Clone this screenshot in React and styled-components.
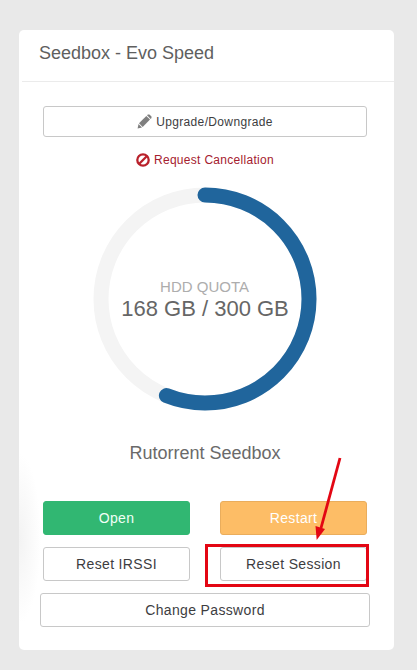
import React from "react";
import styled, { createGlobalStyle } from "styled-components";

const USED = 168;
const TOTAL = 300;
const RADIUS = 104;

const GlobalStyle = createGlobalStyle`
  html, body {
    margin: 0;
    background: #e9e9e9;
    font-family: "Liberation Sans", Arial, sans-serif;
  }
`;

const Page = styled.div`
  position: relative;
  width: 417px;
  height: 670px;
  padding: 30px 23px 20px 19px;
  box-sizing: border-box;
  overflow: hidden;
`;

const Card = styled.section`
  height: 620px;
  background: radial-gradient(ellipse 22px 85px at 0 82%, #f3f3f3, #fff);
  border-radius: 5px;
  box-sizing: border-box;
`;

const Header = styled.header`
  height: 52px;
  margin-left: 3px;
  padding-left: 18px;
  box-sizing: border-box;
  border-bottom: 1px solid #ebebeb;
  display: flex;
  align-items: center;
  padding-bottom: 5px;
`;

const Title = styled.h2`
  margin: 0 0 0 -1px;
  font-size: 18px;
  font-weight: 400;
  color: #5f5f5f;
`;

const Body = styled.div`
  padding: 24px 27px 0 24px;
  display: flex;
  flex-direction: column;
  align-items: stretch;
`;

const Button = styled.button`
  height: ${(p) => p.$height || 34}px;
  margin: 0;
  padding: 0;
  border: 1px solid ${(p) => p.$border || "#c8c8c8"};
  border-radius: 3px;
  background: ${(p) => p.$bg || "#fff"};
  color: ${(p) => p.$color || "#3d3d3f"};
  font-family: inherit;
  font-size: ${(p) => p.$size || 14}px;
  letter-spacing: 0.35px;
  display: flex;
  align-items: center;
  justify-content: center;
  gap: 4px;
  box-sizing: border-box;
`;

const CancelLink = styled.a`
  margin-top: 15px;
  height: 16px;
  display: flex;
  align-items: center;
  justify-content: center;
  gap: 4px;
  font-size: 12px;
  letter-spacing: 0.3px;
  color: #a5202e;
`;

const Quota = styled.div`
  position: relative;
  align-self: center;
  width: 224px;
  height: 224px;
  margin-top: 19px;
`;

const Ring = styled.svg`
  display: block;
`;

const QuotaText = styled.div`
  position: absolute;
  inset: 0;
  display: flex;
  flex-direction: column;
  align-items: center;
  justify-content: center;
`;

const QuotaLabel = styled.div`
  font-size: 15px;
  line-height: 17px;
  margin-top: 1px;
  margin-right: 1px;
  color: #adadad;
`;

const QuotaValue = styled.div`
  font-size: 22px;
  line-height: 27px;
  color: #666;
`;

const ServiceName = styled.h3`
  margin: 30px 0 0;
  font-size: 18px;
  line-height: 24px;
  font-weight: 400;
  text-align: center;
  color: #6a6a6a;
`;

const ButtonGrid = styled.div`
  margin-top: 36px;
  display: grid;
  grid-template-columns: 147px 147px;
  justify-content: space-between;
  row-gap: 12px;
`;

const WideButton = styled(Button)`
  margin: 12px -3px 0;
`;

const Highlight = styled.div`
  position: absolute;
  left: 205px;
  top: 544px;
  width: 164px;
  height: 43px;
  box-sizing: border-box;
  border: 3px solid #e30613;
`;

const Arrow = styled.svg`
  position: absolute;
  left: 310px;
  top: 450px;
`;

const PencilIcon = () => (
  <svg width="15" height="15" viewBox="0 0 15 15" fill="#7f7f7f">
    <polygon points="2,9.2 9.3,2 13,5.6 5.7,12.9" />
    <polygon points="0.6,14.4 1.5,10 5,13.6" />
    <polygon points="10,1.3 10.9,0.5 12.4,0.5 14.5,2.6 14.5,4 13.7,4.9" />
  </svg>
);

const BanIcon = () => (
  <svg width="14" height="14" viewBox="0 0 14 14">
    <circle cx="7" cy="7" r="5.7" fill="none" stroke="#b9212b" strokeWidth="2.3" />
    <line x1="3" y1="11" x2="11" y2="3" stroke="#b9212b" strokeWidth="2.3" />
  </svg>
);

export default function App() {
  const circumference = 2 * Math.PI * RADIUS;
  const filled = (USED / TOTAL) * circumference;

  return (
    <Page>
      <GlobalStyle />
      <Card>
        <Header>
          <Title>Seedbox - Evo Speed</Title>
        </Header>
        <Body>
          <Button $height={31} $size={12}>
            <PencilIcon />
            Upgrade/Downgrade
          </Button>
          <CancelLink>
            <BanIcon />
            Request Cancellation
          </CancelLink>
          <Quota>
            <Ring width="224" height="224" viewBox="0 0 224 224">
              <circle cx="112" cy="112" r={RADIUS} fill="none" stroke="#f4f4f4" strokeWidth="15" />
              <circle
                cx="112"
                cy="112"
                r={RADIUS}
                fill="none"
                stroke="#20659c"
                strokeWidth="15"
                strokeLinecap="round"
                strokeDasharray={`${filled} ${circumference}`}
                transform="rotate(-90 112 112)"
              />
            </Ring>
            <QuotaText>
              <QuotaLabel>HDD QUOTA</QuotaLabel>
              <QuotaValue>168 GB / 300 GB</QuotaValue>
            </QuotaText>
          </Quota>
          <ServiceName>Rutorrent Seedbox</ServiceName>
          <ButtonGrid>
            <Button $bg="#31b772" $border="#31b772" $color="#f0fff6">Open</Button>
            <Button $bg="#fdbd66" $border="#eaad5c" $color="#fff">Restart</Button>
            <Button>Reset IRSSI</Button>
            <Button>Reset Session</Button>
          </ButtonGrid>
          <WideButton>Change Password</WideButton>
        </Body>
      </Card>
      <Highlight />
      <Arrow width="40" height="100" viewBox="0 0 40 100">
        <line x1="30" y1="8" x2="11" y2="78" stroke="#e30613" strokeWidth="2.8" />
        <polygon points="6.7,90 5.5,76 15,79" fill="#e30613" />
      </Arrow>
    </Page>
  );
}
